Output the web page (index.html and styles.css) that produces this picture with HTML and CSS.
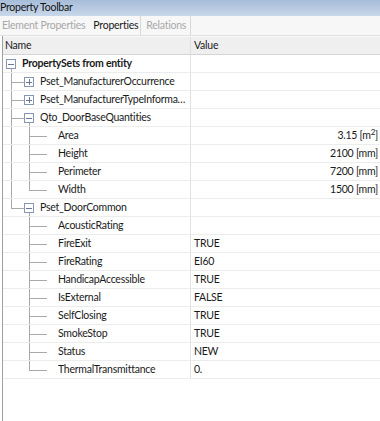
FILE: index.html
```html
<!DOCTYPE html>
<html>
<head>
<meta charset="utf-8">
<link rel="stylesheet" href="styles.css">
</head>
<body>
<div class="title">Property Toolbar</div>
<div class="tabs">
  <span class="tab dim">Element Properties</span>
  <span class="tab active">Properties</span>
  <span class="tab dim sep">Relations</span>
</div>
<div class="grid">
  <div class="head">
    <div class="c1">Name</div>
    <div class="c2">Value</div>
  </div>

  <div class="row">
    <div class="c1"><svg class="tree" width="19" height="18"><line x1="8.5" y1="14" x2="8.5" y2="18"/><rect class="box" x="3.5" y="4.5" width="9" height="9"/><line class="sign" x1="5" y1="9.5" x2="11" y2="9.5"/></svg><span class="txt bold">PropertySets from entity</span></div>
    <div class="c2"></div>
  </div>

  <div class="row">
    <div class="c1"><svg class="tree" width="37" height="18"><line x1="8.5" y1="0" x2="8.5" y2="18"/><line x1="8" y1="9.5" x2="21" y2="9.5"/><rect class="box" x="21.5" y="4.5" width="9" height="9"/><line class="sign" x1="23" y1="9.5" x2="29" y2="9.5"/><line class="sign" x1="26.5" y1="6" x2="26.5" y2="12"/></svg><span class="txt">Pset_ManufacturerOccurrence</span></div>
    <div class="c2"></div>
  </div>

  <div class="row">
    <div class="c1"><svg class="tree" width="37" height="18"><line x1="8.5" y1="0" x2="8.5" y2="18"/><line x1="8" y1="9.5" x2="21" y2="9.5"/><rect class="box" x="21.5" y="4.5" width="9" height="9"/><line class="sign" x1="23" y1="9.5" x2="29" y2="9.5"/><line class="sign" x1="26.5" y1="6" x2="26.5" y2="12"/></svg><span class="txt">Pset_ManufacturerTypeInformation</span></div>
    <div class="c2"></div>
  </div>

  <div class="row">
    <div class="c1"><svg class="tree" width="37" height="18"><line x1="8.5" y1="0" x2="8.5" y2="18"/><line x1="8" y1="9.5" x2="21" y2="9.5"/><line x1="26.5" y1="14" x2="26.5" y2="18"/><rect class="box" x="21.5" y="4.5" width="9" height="9"/><line class="sign" x1="23" y1="9.5" x2="29" y2="9.5"/></svg><span class="txt">Qto_DoorBaseQuantities</span></div>
    <div class="c2"></div>
  </div>

  <div class="row">
    <div class="c1"><svg class="tree" width="55" height="18"><line x1="8.5" y1="0" x2="8.5" y2="18"/><line x1="26.5" y1="0" x2="26.5" y2="18"/><line x1="26" y1="9.5" x2="44" y2="9.5"/></svg><span class="txt">Area</span></div>
    <div class="c2 num">3.15 [m<sup>2</sup>]</div>
  </div>
  <div class="row">
    <div class="c1"><svg class="tree" width="55" height="18"><line x1="8.5" y1="0" x2="8.5" y2="18"/><line x1="26.5" y1="0" x2="26.5" y2="18"/><line x1="26" y1="9.5" x2="44" y2="9.5"/></svg><span class="txt">Height</span></div>
    <div class="c2 num">2100 [mm]</div>
  </div>
  <div class="row">
    <div class="c1"><svg class="tree" width="55" height="18"><line x1="8.5" y1="0" x2="8.5" y2="18"/><line x1="26.5" y1="0" x2="26.5" y2="18"/><line x1="26" y1="9.5" x2="44" y2="9.5"/></svg><span class="txt">Perimeter</span></div>
    <div class="c2 num">7200 [mm]</div>
  </div>
  <div class="row">
    <div class="c1"><svg class="tree" width="55" height="18"><line x1="8.5" y1="0" x2="8.5" y2="18"/><line x1="26.5" y1="0" x2="26.5" y2="10"/><line x1="26" y1="9.5" x2="44" y2="9.5"/></svg><span class="txt">Width</span></div>
    <div class="c2 num">1500 [mm]</div>
  </div>

  <div class="row">
    <div class="c1"><svg class="tree" width="37" height="18"><line x1="8.5" y1="0" x2="8.5" y2="10"/><line x1="8" y1="9.5" x2="21" y2="9.5"/><line x1="26.5" y1="14" x2="26.5" y2="18"/><rect class="box" x="21.5" y="4.5" width="9" height="9"/><line class="sign" x1="23" y1="9.5" x2="29" y2="9.5"/></svg><span class="txt">Pset_DoorCommon</span></div>
    <div class="c2"></div>
  </div>

  <div class="row">
    <div class="c1"><svg class="tree" width="55" height="18"><line x1="26.5" y1="0" x2="26.5" y2="18"/><line x1="26" y1="9.5" x2="44" y2="9.5"/></svg><span class="txt">AcousticRating</span></div>
    <div class="c2"></div>
  </div>
  <div class="row">
    <div class="c1"><svg class="tree" width="55" height="18"><line x1="26.5" y1="0" x2="26.5" y2="18"/><line x1="26" y1="9.5" x2="44" y2="9.5"/></svg><span class="txt">FireExit</span></div>
    <div class="c2">TRUE</div>
  </div>
  <div class="row">
    <div class="c1"><svg class="tree" width="55" height="18"><line x1="26.5" y1="0" x2="26.5" y2="18"/><line x1="26" y1="9.5" x2="44" y2="9.5"/></svg><span class="txt">FireRating</span></div>
    <div class="c2">EI60</div>
  </div>
  <div class="row">
    <div class="c1"><svg class="tree" width="55" height="18"><line x1="26.5" y1="0" x2="26.5" y2="18"/><line x1="26" y1="9.5" x2="44" y2="9.5"/></svg><span class="txt">HandicapAccessible</span></div>
    <div class="c2">TRUE</div>
  </div>
  <div class="row">
    <div class="c1"><svg class="tree" width="55" height="18"><line x1="26.5" y1="0" x2="26.5" y2="18"/><line x1="26" y1="9.5" x2="44" y2="9.5"/></svg><span class="txt">IsExternal</span></div>
    <div class="c2">FALSE</div>
  </div>
  <div class="row">
    <div class="c1"><svg class="tree" width="55" height="18"><line x1="26.5" y1="0" x2="26.5" y2="18"/><line x1="26" y1="9.5" x2="44" y2="9.5"/></svg><span class="txt">SelfClosing</span></div>
    <div class="c2">TRUE</div>
  </div>
  <div class="row">
    <div class="c1"><svg class="tree" width="55" height="18"><line x1="26.5" y1="0" x2="26.5" y2="18"/><line x1="26" y1="9.5" x2="44" y2="9.5"/></svg><span class="txt">SmokeStop</span></div>
    <div class="c2">TRUE</div>
  </div>
  <div class="row">
    <div class="c1"><svg class="tree" width="55" height="18"><line x1="26.5" y1="0" x2="26.5" y2="18"/><line x1="26" y1="9.5" x2="44" y2="9.5"/></svg><span class="txt">Status</span></div>
    <div class="c2">NEW</div>
  </div>
  <div class="row">
    <div class="c1"><svg class="tree" width="55" height="18"><line x1="26.5" y1="0" x2="26.5" y2="10"/><line x1="26" y1="9.5" x2="44" y2="9.5"/></svg><span class="txt">ThermalTransmittance</span></div>
    <div class="c2">0.</div>
  </div>
</div>
</body>
</html>
```

FILE: styles.css
```css
html, body {
  margin: 0;
  padding: 0;
  width: 380px;
  height: 421px;
  overflow: hidden;
  background: #ffffff;
  font-family: Lato, "Noto Sans", sans-serif;
  font-size: 10.5px;
  letter-spacing: -0.25px;
  color: #1a1a1a;
}

.title {
  height: 16px;
  line-height: 15px;
  background: linear-gradient(#a6bcd8, #c9d8ea);
  color: #111;
}

.tabs {
  height: 19px;
  display: flex;
  align-items: center;
  background: #f7f7f7;
  border-bottom: 1px solid #e2e2e2;
}

.tab {
  padding: 0 2px;
  height: 19px;
  line-height: 19px;
}

.tab.dim {
  color: #a8a8a8;
}

.tab.active {
  color: #1a1a1a;
  margin-left: 4px;
  padding-right: 2px;
  border-right: 1px solid #d8d8d8;
}

.tab.sep {
  padding-left: 5px;
  padding-right: 4px;
  border-right: 1px solid #d8d8d8;
}

.grid {
  border-left: 1px solid #a0a0a0;
  margin-left: 2px;
  height: 386px;
}

.head {
  display: flex;
  height: 17px;
  background: #efefef;
  border-bottom: 1px solid #d4d4d4;
  border-top: 1px solid #f8f8f8;
}

.head .c1, .head .c2 {
  line-height: 17px;
}

.c1 {
  width: 188px;
  padding-left: 2px;
  border-right: 1px solid #e0e0e0;
  display: flex;
  align-items: center;
  white-space: nowrap;
  overflow: hidden;
  box-sizing: border-box;
  flex: none;
}

.c2 {
  flex: 1;
  padding-left: 3px;
  padding-right: 2px;
  white-space: nowrap;
}

.row {
  display: flex;
  height: 18px;
  line-height: 17px;
  border-bottom: 1px solid #ececec;
  box-sizing: border-box;
}

.row .c1 {
  padding-left: 0;
}

.tree {
  flex: none;
  display: block;
  align-self: flex-start;
  margin-top: -0.5px;
}

.tree line {
  stroke: #a9a9a9;
  stroke-width: 1;
}

.tree .box {
  fill: #ffffff;
  stroke: #8796b4;
  stroke-width: 1;
}

.tree line.sign {
  stroke: #6a7896;
}

.txt {
  flex: 1;
  min-width: 0;
  overflow: hidden;
  text-overflow: ellipsis;
  padding-right: 4px;
}

.bold {
  font-weight: bold;
}

.num {
  text-align: right;
}

sup {
  font-size: 8px;
  line-height: 0;
  vertical-align: 4px;
}
```
